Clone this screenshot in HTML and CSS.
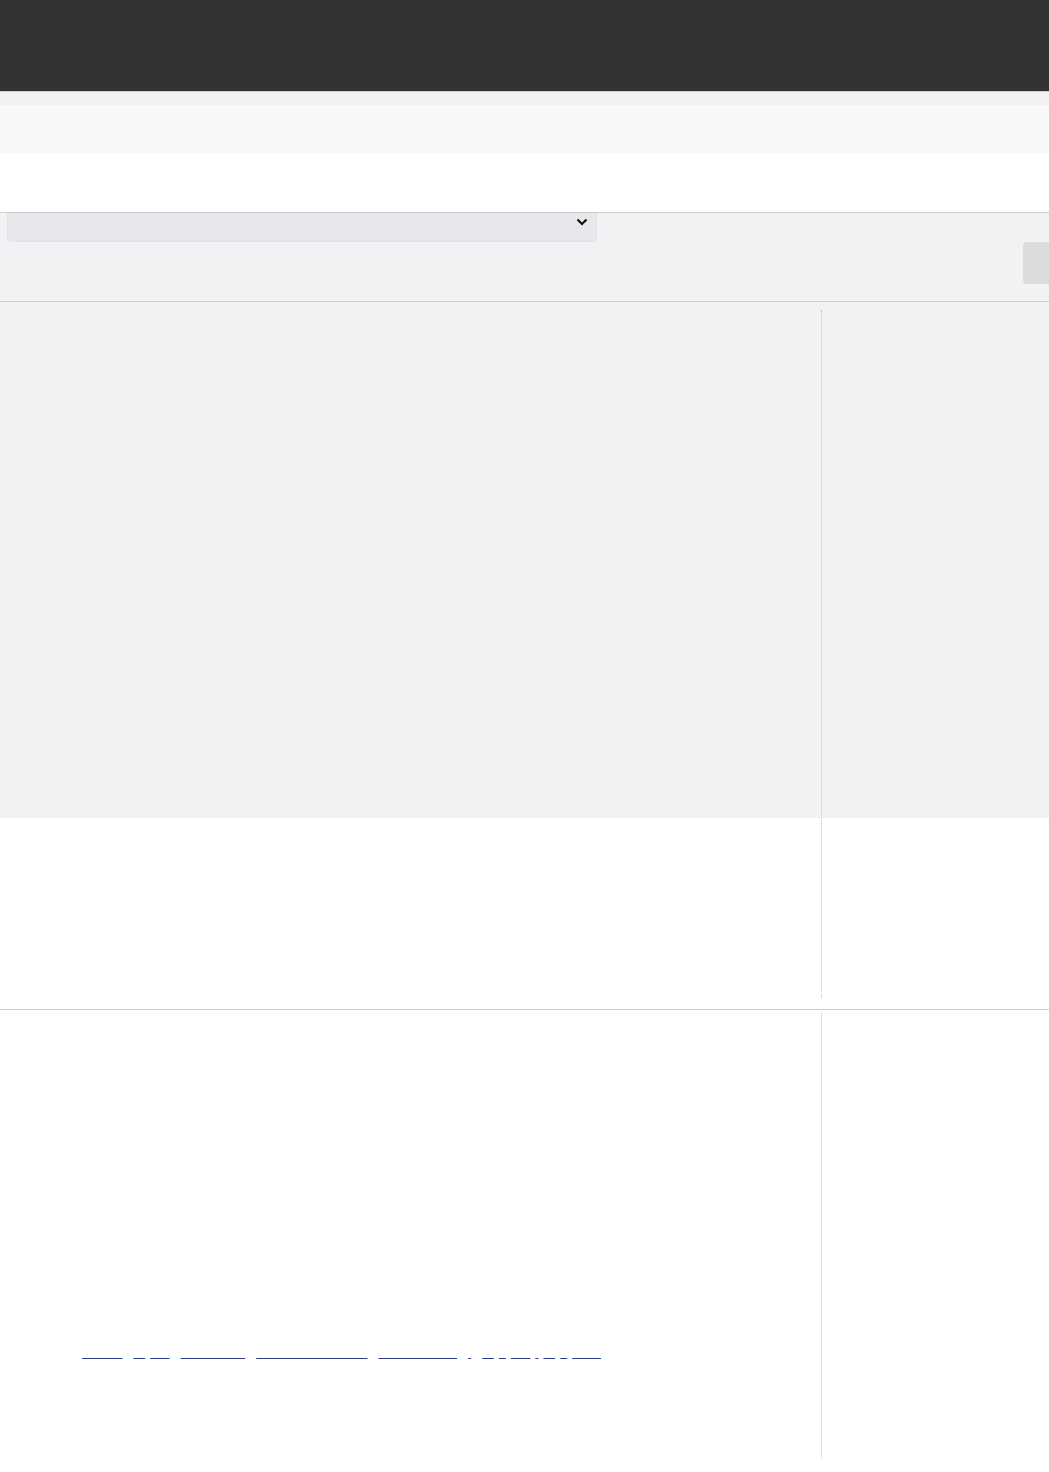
FILE: index.html
```html
<!DOCTYPE html>
<html lang="en">
<head>
  <meta charset="UTF-8"/>
  <meta name="viewport" content="width=device-width,initial-scale=1"/>
  <title>Editor</title>
  <link rel="stylesheet" href="styles.css">
</head>
<body>

  <header class="topbar">
    <span class="brand">Sandbox</span>
  </header>
  <div class="subbar"></div>
  <div class="toolbar">
    <span>File</span> <span>Edit</span> <span>View</span>
  </div>
  <div class="titlebar">
    <h1>Untitled page</h1>
  </div>

  <div class="controls">
    <div class="select">
      <span>Choose a template</span>
      <svg class="chevron" width="12" height="8" viewBox="0 0 12 8">
        <path d="M1.5 1.5 L6 6 L10.5 1.5" fill="none" stroke="#111" stroke-width="2.2"/>
      </svg>
    </div>
    <button class="run">Run</button>
  </div>

  <section class="panel panel-preview">
    <div class="content">
      <p>Preview</p>
    </div>
    <aside class="aside aside-top">
      <p>Notes</p>
    </aside>
  </section>

  <section class="panel">
    <div class="content">
      <p class="links"><a href="#">Forum</a><a href="#" class="tight">to</a><a href="#">the</a><a href="#">Reference</a><a href="#">Privacy statement</a><a href="#">Source code</a><a href="#">i</a><a href="#" class="tight">of</a><a href="#" class="tight">if</a><a href="#" class="tight">the</a><a href="#" class="tight">i</a><a href="#" class="tight">of</a><a href="#" class="tight">if</a><a href="#">Help</a></p>
    </div>
    <aside class="aside aside-bottom">
      <p>Outline</p>
    </aside>
  </section>

</body>
</html>
```

FILE: styles.css
```css
:root {
  --dark: #333333;
  --line: #cccccc;
  --panel: #f1f2f4;
  --link: #2b3e8c;
}

* { box-sizing: border-box; margin: 0; padding: 0; font-family: "Liberation Sans", Arial, sans-serif; }

body {
  color: transparent;
  background: #fff;
  overflow-x: hidden;
  font-size: 14px;
}

.topbar {
  height: 92px;
  background: var(--dark);
  border-bottom: 1px solid var(--line);
  padding: 30px 20px;
}

.subbar {
  height: 13px;
  background: #f3f2f0;
}

.toolbar {
  height: 48px;
  background: #f8f8f8;
  padding: 14px 20px;
}

.titlebar {
  height: 60px;
  border-bottom: 1px solid var(--line);
  padding: 16px 20px;
}

.titlebar h1 { font-size: 20px; font-weight: normal; }

.controls {
  height: 89px;
  background: var(--panel);
  border-bottom: 1px solid var(--line);
  display: flex;
  align-items: flex-start;
  padding-left: 7px;
  overflow: hidden;
}

.select {
  width: 590px;
  height: 29px;
  background: #e8e8ec;
  border: 1px solid #e2e2e6;
  border-top: none;
  border-radius: 0 0 5px 5px;
  display: flex;
  align-items: center;
  justify-content: space-between;
  padding: 0 8px 10px 10px;
}

.chevron { display: block; }

.run {
  margin: 29px -40px 0 auto;
  width: 66px;
  height: 42px;
  background: #dcdcdc;
  border: none;
  border-radius: 4px;
  color: transparent;
  font-size: 14px;
}

.panel {
  display: flex;
  padding: 8px 0 11px;
  border-bottom: 1px solid var(--line);
}

.panel-preview {
  background: linear-gradient(var(--panel) 0 516px, #fff 516px);
}

.panel:last-child {
  border-bottom: none;
  padding: 3px 0 14px;
}

.content {
  width: 821px;
  padding: 20px 82px;
}

.aside {
  flex: 1;
  border-left: 1px dotted #c4c4c4;
  padding: 10px 16px;
}

.aside-top { height: 688px; }
.aside-bottom { height: 445px; }

.links {
  margin-top: 308px;
  font-size: 14px;
  line-height: 18px;
}

.links a {
  color: transparent;
  text-decoration: underline;
  text-decoration-color: var(--link);
  text-underline-offset: 3px;
  margin-right: 11px;
}

.links a.tight { margin-right: 5px; }
```
